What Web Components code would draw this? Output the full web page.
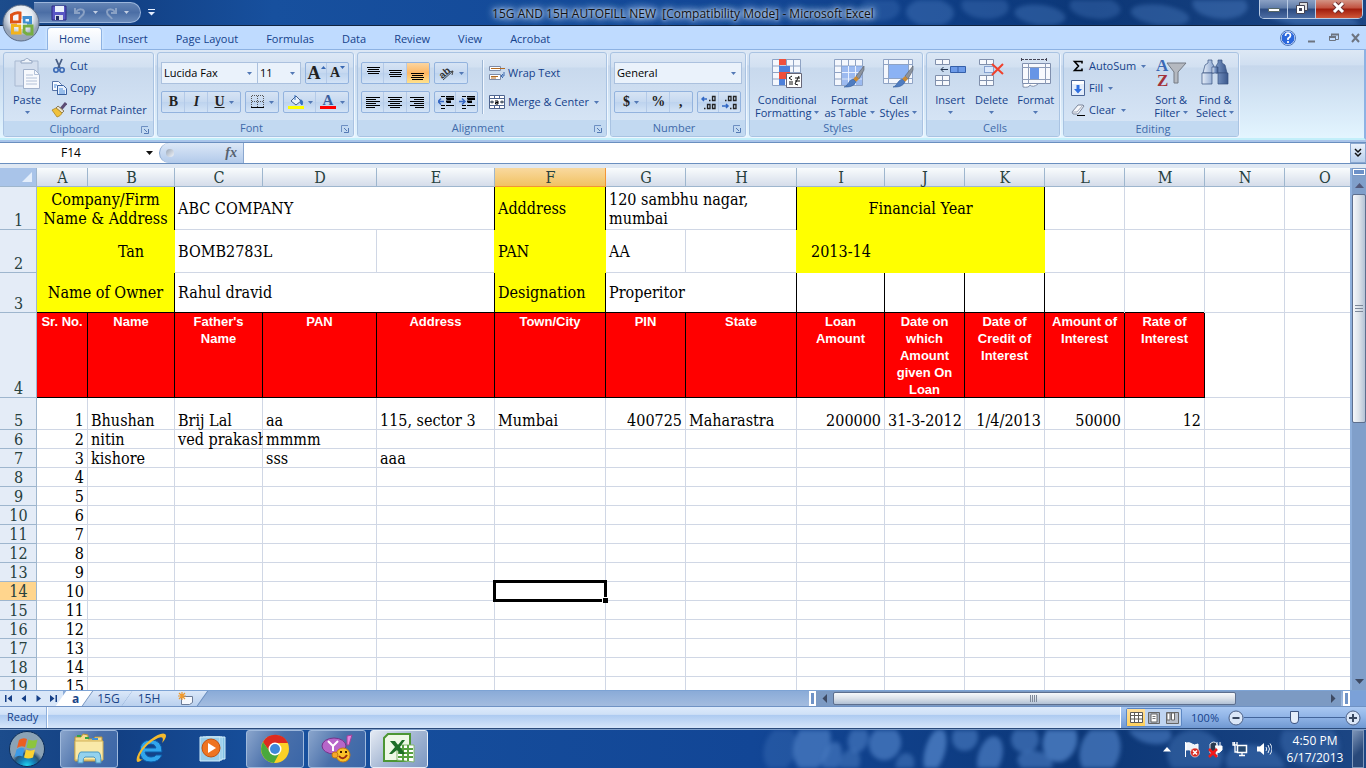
<!DOCTYPE html>
<html lang="en">
<head>
<meta charset="utf-8">
<title>15G AND 15H AUTOFILL NEW</title>
<style>
  html, body { height: 100%; }
  body {
    margin: 0;
    overflow: hidden;
    font: 11px/16px "Open Sans", "Noto Sans", sans-serif;
    color: #15428b;
  }
</style>
</head>
<body>
<excel-desktop></excel-desktop>

<script>
// ICONS - each one is [width, height, svg markup]
const paper = '<path d="M1.5 1.5h28v26h-28z" fill="#f4f7fd" stroke="#8fa3c4"/><path d="M1 8h29M1 14.500h29M1 21h29M8.500 1v27M15.500 1v27M22.500 1v27" stroke="#8fa3c4"/>';
const brush = '<path d="M31 8 23 18l3 3 5-9z" fill="#8c939d" stroke="#555c66" stroke-width=".6"/><path d="m23 18-3 3 3 3 3-3z" fill="#c98a35"/><path d="m20 21 3 3c-3 5-7 5-12 5 4-1 4-6 9-8z" fill="#4f7cc0" stroke="#305a9b" stroke-width=".6"/>';
const ICONS = {
  save: [16, 16, '<path d="M1 1h14v14H1z" fill="#5856c4" stroke="#2e2a85"/><path d="M4 1h9v6H4z" fill="#e9f0fb"/><path d="M4 10h8v5H4z" fill="#d9deea"/><path d="M5 11h3v4H5z" fill="#222b66"/>'],
  undo: [14, 14, '<path d="M2 2v5h5M3 6c3-4 8-3 8 0 0 4-4 4-5 7" fill="none" stroke="#8aa1c4" stroke-width="2"/>'],
  redo: [14, 14, '<path d="M12 2v5H7M11 6C8 2 3 3 3 6c0 4 4 4 5 7" fill="none" stroke="#8aa1c4" stroke-width="2"/>'],
  qat: [7, 7, '<path d="M0 .5h7" stroke="#e4eeff"/><path d="M0 3h7L3.500 6.500z" fill="#e4eeff"/>'],
  arrow: [5, 3, '<path d="M0 0h5L2.500 3z" fill="#5278b5"/>'],
  arrowpale: [5, 3, '<path d="M0 0h5L2.500 3z" fill="#c3cfe2"/>'],
  arrowdark: [7, 4, '<path d="M0 0h7L3.500 4z" fill="#111"/>'],
  orb: [38, 38, '<defs><radialGradient id="g" cx=".5" cy=".35"><stop offset="0" stop-color="#fff"/><stop offset=".65" stop-color="#e7ecf2"/><stop offset="1" stop-color="#98a5b8"/></radialGradient></defs><circle cx="19" cy="19" r="18" fill="url(#g)" stroke="#5b6d88"/><g fill="none" stroke-width="3"><path d="M18 9v9H9.500v-7q4-3 8.500-2z" stroke="#de5216"/><path d="M22 13.500h6.500v5.500H22z" stroke="#3f8ed0"/><path d="M10.500 21.500H18V29h-7.500z" stroke="#f2b31d"/><path d="M22 22h8v8h-5l-3-2z" stroke="#76ae42"/></g><path d="M20 15v10M15 20h10" stroke="#fff"/>'],
  paste: [28, 32, '<path d="M2 3h23v25H2z" fill="#d3deee" stroke="#a9b9d1"/><path d="M8 5V3l4-1c0-2 4-2 4 0l3 1v2z" fill="#eef3fa" stroke="#94a6c2"/><path d="M10.500 11.500h11l5 5v14h-16z" fill="#f7f9fd" stroke="#a2b2cc"/><path d="M21.500 11.500v5h5M13 17h7M13 20h11M13 23h11M13 26h11" fill="none" stroke="#b3c1d8"/>'],
  cut: [16, 16, '<path d="M5 1l4 9M11 1 7 10" stroke="#4a5f86" stroke-width="1.800"/><circle cx="5" cy="12" r="2.200" fill="none" stroke="#3a69b5" stroke-width="1.600"/><circle cx="11" cy="12" r="2.200" fill="none" stroke="#3a69b5" stroke-width="1.600"/>'],
  copy: [16, 16, '<path d="M1.500 1.500h6l3 3v6h-9z" fill="#f7faff" stroke="#5774a8"/><path d="M6.500 5.500h6l3 3v6h-9z" fill="#e6effc" stroke="#375f9f"/><path d="M3 5h3M3 7h2M8 9h4M8 11h6M8 13h6" stroke="#4a8cd9"/>'],
  painter: [16, 16, '<path d="M15 1 10 7" stroke="#5b4c75" stroke-width="3"/><path d="m7 4 6 5-2 2-6-5z" fill="#e9e2cf" stroke="#8b7d5e"/><path d="M5 6 1 8l5 7c3-1 4-2 5-4z" fill="#f0c13b" stroke="#a8862b" stroke-width=".8"/>'],
  launch: [8, 8, '<path d="M7 .5H.500V7" fill="none" stroke="#6d8fc2"/><path d="M3 3l3 3M7.500 3v4.500H3" fill="none" stroke="#5479b3"/>'],
  borders: [14, 14, '<path d="M.5 1v11M6.500 1v11M12.500 1v11M1 .5h12M1 6.500h12" fill="none" stroke="#555" stroke-dasharray="1 1"/><path d="M0 12.500h13" stroke="#000"/>'],
  fill: [16, 16, '<path d="M3 7 8 2l5 5-5 4z" fill="#e8f1fc" stroke="#45618d"/><path d="M7 1v5M12 6c3 0 3 2 2 5-2-1-1-3-2-5z" stroke="#3670c0" fill="#3670c0"/><path d="M0 12h16v3H0z" fill="#ff0"/>'],
  fontcolor: [16, 16, '<text x="8" y="11" text-anchor="middle" font-family="Liberation Serif, serif" font-weight="bold" font-size="15" fill="#3b5d9c">A</text><path d="M0 12h16v3H0z" fill="red"/>'],
  sizeup: [5, 4, '<path d="M0 3 2.500 0 5 3z" fill="#3868b3"/>'],
  sizedown: [5, 4, '<path d="M0 0h5L2.500 3z" fill="#3868b3"/>'],
  orient: [16, 16, '<path d="M4 15 14 6M14 6l-4 1M14 6l-1 4" stroke="#444" fill="none"/><text x="0" y="11" font-size="10" font-weight="bold" font-family="Liberation Sans, sans-serif" transform="rotate(-40 6 8)" fill="#333">ab</text>'],
  wrap: [16, 16, '<path d="M.5 1.500h11v4H.500zM.5 9.500h11v5H.500z" fill="#fff" stroke="#7c8ba8"/><path d="M2 3.500h14M2 11.500h7M2 13h5" stroke="#b36a22"/><path d="M15 7v4h-2M14 9l-2 2 2 2" fill="none" stroke="#3c6ab0"/>'],
  merge: [16, 16, '<path d="M.5 1.500h15v13H.500z" fill="#fff" stroke="#4e648f"/><path d="M1 4.500h14M1 11.500h14M5.500 1v3M10.500 1v3M5.500 12v3M10.500 12v3" stroke="#4e648f"/><path d="M1 8h4M11 8h4M3 6.500v3M13 6.500v3" stroke="#234"/><path d="M6 7h3v3H6.500V8.500H9" fill="none" stroke="#000"/>'],
  decup: [16, 15, '<path d="M6 4H1M3 2 1 4l2 2" stroke="#3268c4" stroke-width="1.500" fill="none"/><g fill="none" stroke="#222" stroke-width="1.300"><path d="M8 5.500h1.500M11.500 1.500h2.500v4h-2.500zM3 13.500h1.500M6.500 9.500H9v4H6.500zM11.500 9.500H14v4h-2.500z"/></g>'],
  decdown: [16, 15, '<path d="M0 11h6M4 9l2 2-2 2" stroke="#3268c4" stroke-width="1.500" fill="none"/><g fill="none" stroke="#222" stroke-width="1.300"><path d="M3 5.500h1.500M6.500 1.500H9v4H6.500zM11.500 1.500H14v4h-2.500zM8 13.500h1.500M11.500 9.500H14v4h-2.500z"/></g>'],
  cond: [32, 32, paper + '<path d="M8 1h7v6H8zM8 14h11v7H8z" fill="#f0503c"/><path d="M8 8h11v6H8zM8 21h6v6H8z" fill="#4d80da"/><path d="M15.500 15.500h15v14h-15z" fill="#fff" stroke="#667"/><path d="m21 18-3 2 3 2M18 24h4M18 26h4M24 20h5M24 23h5M28 18l-4 8M24 26l3 1" fill="none" stroke="#111"/>'],
  ftable: [32, 32, paper + '<path d="M9 8h20v19H9z" fill="#6d9aea" opacity=".65"/><path d="M9 14.500h20M9 21h20M15.500 8v19M22.500 8v19" stroke="#e8f0ff"/>' + brush],
  cstyle: [32, 32, '<path d="M1.500 1.500h29v24h-29z" fill="#f4f7fd" stroke="#8fa3c4"/><path d="M1 6.500h29M1 20.500h29M6.500 1v25M26.500 1v25" stroke="#8fa3c4"/><path d="M7 7h19v13H7z" fill="#8bb2f4"/>' + brush],
  insert: [32, 32, '<path d="M1.500 1.500h14v5h-14zM1.500 17.500h14v10h-14zM8.500 1.500v5M8.500 17.500v10M1.500 22.500h14" fill="#f7f9fd" stroke="#8190ac"/><path d="M16.500 8.500h15v6h-15zM24 8.500v6" fill="#6c9ae8" stroke="#345fa9"/><path d="M14 11.500H7M9.500 9 7 11.500 9.500 14" stroke="#23344f" fill="none"/>'],
  del: [32, 32, '<path d="M3.500 1.500h14v5h-14zM3.500 17.500h14v10h-14zM10.500 1.500v5M10.500 17.500v10M3.500 22.500h14" fill="#f7f9fd" stroke="#8190ac"/><path d="M8.500 8.500h9v6h-9z" fill="#dce8fb" stroke="#345fa9" stroke-dasharray="1 1"/><path d="m16 6 11 10M27 6 16 17" stroke="#f0412c" stroke-width="2"/>'],
  format: [32, 32, '<path d="M1 1.500h26M1.500 0v4M26.500 0v4" stroke="#445" stroke-dasharray="3 1"/><path d="M2.500 5.500h28v20h-28z" fill="#f7f9fd" stroke="#7f8fae"/><path d="M2 9.500h28M2 21.500h28M8.500 5v21M25.500 5v21" stroke="#8d9cb8"/><path d="M10 10h9v11h-9z" fill="#6795e6"/><path d="M3 26v3q6 1 7-2 3 3 8-1" fill="#fff" stroke="#8190ac"/>'],
  sum: [12, 12, '<path d="M10 3.500V1.500H2.500L6.500 6l-4 4.500H10v-2" fill="none" stroke="#000" stroke-width="1.600"/>'],
  filld: [14, 16, '<path d="M.5.500h13v15H.500z" fill="#e3edfb" stroke="#4a6596"/><path d="M1 1h12v3H1z" fill="#fff"/><path d="M5.500 5h3v4H11l-4 4.500L3 9h2.500z" fill="#2f6fe0"/>'],
  clear: [16, 14, '<path d="M2 9 8 2h5l1 1-6 8H3z" fill="#f7f8fb" stroke="#7c879c"/><path d="M2 9h5l6-7" fill="none" stroke="#9da8bb"/><path d="M7 12.500h8" stroke="#000"/>'],
  sort: [32, 32, '<path d="M12 5h19l-8 9v11h-4V14z" fill="#b5b9c0" stroke="#747a84"/><g font-family="Liberation Serif, serif" font-weight="bold" font-size="17"><text x="1" y="13" fill="#3b69b4">A</text><text x="2" y="28" fill="#a3323a">Z</text></g>'],
  find: [32, 32, '<defs><linearGradient id="g"><stop offset="0" stop-color="#e5edf8"/><stop offset=".5" stop-color="#7f9cc9"/><stop offset="1" stop-color="#3a578c"/></linearGradient></defs><g fill="url(#g)" stroke="#37527f" stroke-width=".7"><path d="M9 2h4v3l2 3v7H4l2-8 3-2zM19 2h4v3l3 2 2 8H17V8l2-3z"/><path d="M3 15h10v11H3zM19 15h10v11H19z"/><path d="M13 9h6v6h-6z"/></g>'],
  help: [16, 16, '<circle cx="8" cy="8" r="7" fill="#2c68dc" stroke="#f4f8ff"/><circle cx="8" cy="8" r="7.500" fill="none" stroke="#4d75b8"/><path d="M5.500 6q0-3 2.500-3t2.500 2.500Q10.500 7 8 8.500V10M8 11v2" fill="none" stroke="#fff" stroke-width="1.700"/>'],
  mdimin: [12, 12, '<path d="M2 9.500h7" stroke="#6d7480" stroke-width="2"/>'],
  mdirest: [12, 12, '<path d="M3.500 5V2.500h7v5H8M1.500 4.500h6v4h-6z" fill="none" stroke="#6d7480"/><path d="M3 2.500h8M1 5h7" stroke="#6d7480" stroke-width="2"/>'],
  mdix: [12, 12, '<path d="m2 2 7 8M9 2l-7 8" stroke="#6d7480" stroke-width="2"/>'],
  wmin: [14, 12, '<path d="M1.500 6.500h11v3h-11z" fill="#fff" stroke="#566"/>'],
  wrest: [14, 12, '<path d="M4.500.500h8v8h-8z" fill="#ddd" stroke="#445"/><path d="M1.500 3.500h8v8h-8z" fill="#fff" stroke="#445"/><path d="M4 6h3v3H4z" fill="#445"/>'],
  wx: [14, 12, '<path d="m2 1 9 9M11 1l-9 9" stroke="#6e3030" stroke-width="5"/><path d="m2 1 9 9M11 1l-9 9" stroke="#fff" stroke-width="3"/>'],
  chevrons: [8, 10, '<path d="m1 1 3 3 3-3M1 5l3 3 3-3" fill="none" stroke="#111" stroke-width="1.500"/>'],
  corner: [12, 12, '<path d="M11 1v10H1z" fill="#e4eefb"/>'],
  first: [8, 8, '<path d="M0 0h1.500v7H0zM7 0v7L2.500 3.500z" fill="#153f86"/>'],
  prev: [8, 8, '<path d="M6 0v7L1.500 3.500z" fill="#153f86"/>'],
  next: [8, 8, '<path d="M1.500 0v7L6 3.500z" fill="#153f86"/>'],
  last: [8, 8, '<path d="M5.500 0H7v7H5.500zM0 0v7l4.500-3.500z" fill="#153f86"/>'],
  newsheet: [16, 14, '<path d="M3.500 4.500h11v6l-3 2h-8z" fill="#f5f8fd" stroke="#6c7c98"/><path d="M4 0v8M0 4h8M1 1l6 6M7 1 1 7" stroke="#f0992c" stroke-width="1.200"/>'],
  left: [6, 9, '<path d="M5 0v9L.500 4.500z" fill="#3e4a63"/>'],
  right: [6, 9, '<path d="M1 0v9l4.500-4.500z" fill="#3e4a63"/>'],
  up: [9, 5, '<path d="M0 5h9L4.500 0z" fill="#54597a"/>'],
  down: [9, 5, '<path d="M0 0h9L4.500 5z" fill="#3e4a63"/>'],
  vnormal: [13, 11, '<path d="M.5.500h12v10H.500z" fill="#fff" stroke="#5d5a55"/><path d="M0 3.500h13M0 7h13M4.500 0v11M8.500 0v11" stroke="#5d5a55"/>'],
  vlayout: [12, 12, '<path d="M.5.500h11v11H.500z" fill="#a9b2c0" stroke="#666"/><path d="M3 2h6v8H3z" fill="#fff" stroke="#666"/><path d="M4.500 4.500h3M4.500 6.500h3" stroke="#777"/>'],
  vbreak: [13, 12, '<path d="M.5.500h12v11H.500z" fill="#b7bdc8" stroke="#666"/><path d="M1 1h3v7H1zM5.500 1h3v7h-3z" fill="#fff" stroke="#666"/>'],
  minus: [16, 16, '<circle cx="8" cy="8" r="7" fill="#dbe7f8" stroke="#4a5f86"/><path d="M4.500 8h7" stroke="#38475f" stroke-width="2"/>'],
  plus: [16, 16, '<circle cx="8" cy="8" r="7" fill="#dbe7f8" stroke="#4a5f86"/><path d="M4 8h8M8 4v8" stroke="#38475f" stroke-width="2"/>'],
  start: [38, 38, '<defs><radialGradient id="g" cx=".5" cy="1"><stop offset="0" stop-color="#22e0f8"/><stop offset=".45" stop-color="#1580b8"/><stop offset=".75" stop-color="#2c5577"/><stop offset="1" stop-color="#8ba3b6"/></radialGradient></defs><circle cx="19" cy="19" r="17.500" fill="url(#g)" stroke="#0b2c58"/><path d="M11 10q4-3 8-1l-2 8q-4-2-8 1z" fill="#ec5f22"/><path d="M20.500 9.500q4 2 9 0l-2 8q-5 2-9 0z" fill="#8cc53f"/><path d="M8.500 19.500q4-3 8-1l-2 8q-4-2-8 1z" fill="#3b9be8"/><path d="M18 19.500q4 2 9 0l-2 8q-5 2-9 0z" fill="#fbd232"/>'],
  explorer: [34, 32, '<path d="M3 4h6l2-3 5 1v4h5l2-2h7v24H3z" fill="#f5dc8c" stroke="#b89238"/><path d="M3 8h28v19H3z" fill="#f9e9a8" stroke="#d1b157"/><path d="M5 3h4M13 5h4" stroke="#34a345" stroke-width="2"/><path d="M20 6h6" stroke="#3f8fd7" stroke-width="2"/><path d="M6 30q0-11 3-11h17q3 0 3 11h-5q0-6-2-6h-9q-2 0-2 6z" fill="#93d2ee" stroke="#4b98c2"/>'],
  ie: [34, 34, '<path d="M28 20h-17q1 5 6 5 4 0 5-2h6q-3 7-11 7-11 0-11-11T17 8q11 0 11 12zM11 16h11q-1-4-5-4t-6 4z" fill="#31a5ec" stroke="#0c5ca9"/><path d="M9 27q-8 7-6-2 3-9 13-17 11-8 15-6 3 2-3 9 3-8-4-5Q11 12 6 23q-2 6 3 4z" fill="#f3ba2e"/>'],
  wmp: [32, 30, '<path d="M9 3h19v22H9z" fill="#83c2e4" stroke="#d2eefc"/><path d="M6 3h19v23H6z" fill="#6db4de" stroke="#d2eefc"/><path d="M3 3h20v24H3z" fill="#98cce8" stroke="#d2eefc"/><circle cx="14" cy="14" r="9" fill="#ee7420" stroke="#c2510d"/><path d="m11 9 8 5-8 5z" fill="#fff"/>'],
  chrome: [32, 32, '<circle cx="16" cy="16" r="14" fill="#fbd126"/><path d="M4 9A14 14 0 0 1 29 10H16L11 19z" fill="#dd2a20"/><path d="M4 9a14 14 0 0 0 11 21l6-11H11z" fill="#4aa83d"/><circle cx="16" cy="16" r="6.500" fill="#fff"/><circle cx="16" cy="16" r="5" fill="#3f88d9"/>'],
  yahoo: [34, 30, '<ellipse cx="14" cy="12" rx="12" ry="8" fill="#b766c9" stroke="#74338a"/><path d="m8 7 5 5 5-5M13 12v5" fill="none" stroke="#fff" stroke-width="2"/><path d="m27 2 5-1-3 10h-2z" fill="#e884e0" stroke="#a04298"/><circle cx="23" cy="21" r="7" fill="#f9c229" stroke="#c67a12"/><path d="M19 22q4 5 8-1" fill="none" stroke="#9b2b10" stroke-width="2"/><circle cx="15" cy="21" r="3" fill="#f6a82a" stroke="#c67a12"/><path d="M20 18h2M25 18h2" stroke="#402000" stroke-width="2"/>'],
  excel: [34, 32, '<path d="M6 1h22v25l-3 2H2V5z" fill="#eef8e6" stroke="#4c9633" stroke-width="2"/><path d="M15 12h17v17l-17-2z" fill="#fff" stroke="#7fb46b"/><path d="M16 16h15M16 20h15M16 24h15M21 12v16M26 12v16" stroke="#56a03f" stroke-width="2"/><path d="M8 8h5l3 4 4-5h3l-5 7 5 7h-5l-3-4-5 4H7l6-7z" fill="#1e6e28"/>'],
  trayup: [8, 5, '<path d="M0 4.500h8L4 0z" fill="#fff"/>'],
  flag: [16, 17, '<path d="M1.500 1v15M2 2q4-1 6 1t6 0v7q-3 2-6 0T2 9z" fill="#eef2f8" stroke="#fff"/><circle cx="11" cy="11.500" r="4.500" fill="#d8291f" stroke="#fff" stroke-width=".6"/><path d="m9 9.500 4 4M13 9.500l-4 4" stroke="#fff" stroke-width="1.500"/>'],
  plug: [16, 17, '<path d="M2 3q4-4 7 0v9H2z" fill="#2b3b50" stroke="#dfe6ef"/><path d="M7 5h7v4q-3 4-5 2v5" fill="#fff" stroke="#fff"/><path d="M9 1v4M12 1v4" stroke="#fff"/><path d="m1 8 8 8M9 8l-8 8" stroke="#f31818" stroke-width="2.500"/>'],
  net: [16, 16, '<path d="M5.500 4.500h9v7h-9z" fill="#26496f" stroke="#fff" stroke-width="1.500"/><path d="M7 14.500h6M10 12v2M2.500 1v4M1 1v3h4V1M3 5v6h2" fill="none" stroke="#fff" stroke-width="1.300"/>'],
  vol: [16, 16, '<path d="M1 5.500h3L8 2v12l-4-3.500H1z" fill="#fff"/><path d="M10 6q1.500 2 0 4M12 4q3 4 0 8M14 2.500q4 5.500 0 11" fill="none" stroke="#e6eef8"/>']
};
// horizontal stroke icons: text alignment buttons
const bars = (rows) => rows.map(([x, y, w]) => `<path d="M${x} ${y}.5h${w}" stroke="#000"/>`).join("");
ICONS.atop = [15, 15, bars([[1, 1, 13], [2, 3, 11], [1, 5, 13], [2, 7, 11]])];
ICONS.amid = [15, 15, bars([[1, 4, 13], [2, 6, 11], [1, 8, 13], [2, 10, 11]])];
ICONS.abot = [15, 15, bars([[1, 7, 13], [2, 9, 11], [1, 11, 13], [2, 13, 11]])];
ICONS.aleft = [15, 13, bars([[0, 1, 14], [0, 3, 10], [0, 5, 14], [0, 7, 10], [0, 9, 14], [0, 11, 9]])];
ICONS.acenter = [15, 13, bars([[0, 1, 14], [2, 3, 10], [0, 5, 14], [2, 7, 10], [0, 9, 14], [2, 11, 10]])];
ICONS.aright = [15, 13, bars([[0, 1, 14], [4, 3, 10], [0, 5, 14], [4, 7, 10], [0, 9, 14], [5, 11, 9]])];
const indent = bars([[3, 1, 4], [8, 1, 8], [9, 4, 7], [9, 7, 4], [3, 10, 4], [8, 10, 8], [3, 13, 4]]) + '<path d="M8 3.500h8M8 6.500h5" stroke="#000" stroke-width="2"/>';
ICONS.outdent = [16, 15, indent + '<path d="M6 6.500H0M3 3.500l-3 3 3 3" fill="none" stroke="#3767c2" stroke-width="1.500"/>'];
ICONS.indent = [16, 15, indent + '<path d="M0 6.500h6M3 3.500l3 3-3 3" fill="none" stroke="#3767c2" stroke-width="1.500"/>'];

// small helper: attach the template to the element
function mount(el, html) {
  const template = document.createElement("template");
  template.innerHTML = html;
  el.attachShadow({ mode: "open" }).appendChild(template.content.cloneNode(true));
}

class OfficeIcon extends HTMLElement {
  connectedCallback() {
    if (this.shadowRoot) return;
    const [w, h, art] = ICONS[this.getAttribute("name")];
    mount(this, `<style>:host { display: inline-flex; flex: none; } svg { display: block; }</style>
      <svg width="${w}" height="${h}" viewBox="0 0 ${w} ${h}" aria-hidden="true">${art}</svg>`);
  }
}

// wallpaper showing through the glass of the title bar and the task bar
class AeroGlass extends HTMLElement {
  connectedCallback() {
    if (this.shadowRoot) return;
    const blobs = (this.getAttribute("blobs") || "").split(";").filter(Boolean).map((b) => {
      const [x, y, rx, ry, o] = b.split(" ");
      return `<ellipse cx="${x}" cy="${y}" rx="${rx}" ry="${ry}" opacity="${o}" transform="rotate(15 ${x} ${y})"/>`;
    }).join("");
    mount(this, `
      <style>
        :host { position: absolute; inset: 0; z-index: -1; overflow: hidden; background: linear-gradient(90deg, #1c4c8c, #123f82 8%, #17509e 20%, #124696 55%, #0c3777 80%, #1c4684); }
        svg { width: 100%; height: 100%; filter: blur(2px); }
      </style>
      <svg viewBox="0 0 1366 40" preserveAspectRatio="none" fill="#4d7fc4">${blobs}</svg>`);
  }
}

class TitleBar extends HTMLElement {
  connectedCallback() {
    if (this.shadowRoot) return;
    mount(this, `
      <style>
        :host { display: grid; grid-template-columns: 1fr auto 1fr; height: 26px; position: relative; z-index: 2; border-bottom: 1px solid #10233f; box-sizing: border-box; }
        button { border: 0; padding: 0; background: none; display: flex; align-items: center; justify-content: center; }
        .orb { position: absolute; left: 2px; top: 4px; border-radius: 50%; }
        .quick { display: flex; align-items: center; gap: 7px; }
        .pill { display: flex; align-items: center; gap: 6px; margin-left: 34px; padding: 0 11px 0 17px; height: 21px; box-sizing: border-box; border: 1px solid #9cb6dc; border-left: 0; border-radius: 0 11px 11px 0; background: linear-gradient(#6484b4, #4b6ea5 50%, #6c8cbb); }
        h1 { margin: 0; padding: 5px 16px 0; font: 12px/18px "Open Sans", sans-serif; color: #111; white-space: pre; text-shadow: 0 0 3px #cfe0f7, 0 0 6px #cfe0f7, 0 0 8px #b4ceef, 0 0 10px #b4ceef; }
        .window { justify-self: end; display: flex; margin-right: 3px; height: 18px; border: 1px solid #b9cbe4; border-top: 0; border-radius: 0 0 5px 5px; overflow: hidden; }
        .window button { width: 28px; padding-bottom: 2px; border-right: 1px solid #b9cbe4; background: linear-gradient(#8ba1c4, #5f7ba8 45%, #2b4a80 50%, #4c6da3); }
        .window button.close { width: 46px; border: 0; background: linear-gradient(#d39384, #c2503e 45%, #a01c0c 50%, #cf5638); }
      </style>
      <aero-glass blobs="640 20 20 16 .2;880 14 20 20 .3;930 20 24 22 .4;985 10 24 20 .35;1040 24 26 16 .4;1095 12 26 18 .35;1160 24 30 16 .4;1220 8 28 22 .45;1310 28 50 16 .5"></aero-glass>
      <div class="quick">
        <div class="pill">
          <button aria-label="Save"><office-icon name="save"></office-icon></button>
          <button aria-label="Undo"><office-icon name="undo"></office-icon></button>
          <button aria-label="Undo list"><office-icon name="arrowpale"></office-icon></button>
          <button aria-label="Redo"><office-icon name="redo"></office-icon></button>
          <button aria-label="Redo list"><office-icon name="arrowpale"></office-icon></button>
        </div>
        <button aria-label="Customize toolbar"><office-icon name="qat"></office-icon></button>
      </div>
      <h1>15G AND 15H AUTOFILL NEW  [Compatibility Mode] - Microsoft Excel</h1>
      <div class="window">
        <button aria-label="Minimize"><office-icon name="wmin"></office-icon></button>
        <button aria-label="Restore"><office-icon name="wrest"></office-icon></button>
        <button class="close" aria-label="Close"><office-icon name="wx"></office-icon></button>
      </div>
      <button class="orb" aria-label="Office Button"><office-icon name="orb"></office-icon></button>`);
  }
}

class RibbonTabs extends HTMLElement {
  connectedCallback() {
    if (this.shadowRoot) return;
    const tabs = this.getAttribute("tabs").split(",");
    mount(this, `
      <style>
        :host { display: flex; justify-content: space-between; height: 24px; padding-left: 47px; background: #bfdbff; border-bottom: 1px solid #8db2e3; box-sizing: border-box; }
        nav { display: flex; gap: 4px; align-items: stretch; padding-top: 1px; }
        button { border: 1px solid transparent; border-bottom: 0; padding: 0 11px; background: none; font: inherit; color: inherit; }
        nav button[aria-selected=true] { border-color: #8db2e3; border-radius: 4px 4px 0 0; background: linear-gradient(#fff, #e6effb); margin-bottom: -1px; box-shadow: 0 0 3px #e4f2ff; }
        .tools { display: flex; align-items: center; gap: 10px; padding-right: 4px; }
        .tools button { padding: 0; border: 0; display: flex; }
      </style>
      <nav role="tablist">${tabs.map((t, i) => `<button role="tab" aria-selected="${i === 0}">${t}</button>`).join("")}</nav>
      <div class="tools">
        <button aria-label="Help"><office-icon name="help"></office-icon></button>
        <button aria-label="Minimize sheet"><office-icon name="mdimin"></office-icon></button>
        <button aria-label="Restore sheet"><office-icon name="mdirest"></office-icon></button>
        <button aria-label="Close sheet"><office-icon name="mdix"></office-icon></button>
      </div>`);
  }
}

class RibbonGroup extends HTMLElement {
  connectedCallback() {
    if (this.shadowRoot) return;
    mount(this, `
      <style>
        :host { display: flex; flex-direction: column; flex: none; box-sizing: border-box; height: 85px; border: 1px solid #a9c3e2; border-radius: 3px; overflow: hidden; background: linear-gradient(#dce7f5, #d2e0f1 17%, #c8d9ed 18%, #d9e7f7); box-shadow: 1px 1px 0 #eff6ff; }
        .body { flex: 1; display: flex; padding: 0 3px; }
        footer { display: flex; align-items: center; height: 16px; background: #c2d9f1; color: #3e6aaa; }
        footer span { flex: 1; text-align: center; padding-left: 4px; }
        button { border: 0; padding: 0; margin-right: 4px; background: none; }
      </style>
      <div class="body"><slot></slot></div>
      <footer><span>${this.getAttribute("label")}</span>${this.hasAttribute("launcher") ? `<button aria-label="${this.getAttribute("label")} settings"><office-icon name="launch"></office-icon></button>` : ""}</footer>`);
  }
}

// icon on top, one or two lines of text below
class BigButton extends HTMLElement {
  connectedCallback() {
    if (this.shadowRoot) return;
    const [one, two] = this.getAttribute("label").split("|");
    mount(this, `
      <style>
        :host { display: block; flex: none; }
        button { display: flex; flex-direction: column; align-items: center; height: 100%; border: 0; padding: 5px 0 0; background: none; font: inherit; line-height: 13px; color: inherit; white-space: nowrap; }
        span { display: flex; align-items: center; gap: 3px; min-height: 13px; }
        .one { margin-top: 3px; }
      </style>
      <button><office-icon name="${this.getAttribute("icon")}"></office-icon><span class="one">${one}</span><span>${two || ""}<office-icon name="arrow"></office-icon></span></button>`);
  }
}

class SmallButton extends HTMLElement {
  connectedCallback() {
    if (this.shadowRoot) return;
    const menu = this.hasAttribute("menu") ? '<office-icon name="arrow"></office-icon>' : "";
    mount(this, `
      <style>
        :host { display: block; }
        button { display: flex; align-items: center; gap: 5px; height: 22px; border: 0; padding: 0; background: none; font: inherit; color: inherit; white-space: nowrap; }
        .box { display: flex; justify-content: center; width: 16px; margin-right: -2px; }
      </style>
      <button><span class="box"><office-icon name="${this.getAttribute("icon")}"></office-icon></span><slot></slot>${menu}</button>`);
  }
}

// bordered cluster of tool-buttons
class ToolSet extends HTMLElement {
  connectedCallback() {
    if (this.shadowRoot) return;
    mount(this, `
      <style>
        :host { display: flex; flex: none; box-sizing: border-box; height: 22px; border: 1px solid #93b3de; border-radius: 2px; background: linear-gradient(#d7e4f4, #c5d8f0 50%, #bdd3ee 51%, #d3e3f6); }
      </style><slot></slot>`);
  }
}

class ToolButton extends HTMLElement {
  connectedCallback() {
    if (this.shadowRoot) return;
    const icon = this.getAttribute("icon");
    mount(this, `
      <style>
        :host { display: block; flex: 1; min-width: ${this.hasAttribute("menu") ? 32 : 21}px; box-shadow: -1px 0 #b4cae8; }
        :host(:first-child) { box-shadow: none; }
        :host([active]) button { background: linear-gradient(#fbd5a0, #fdb763 50%, #ffe28c); }
        button { display: flex; align-items: center; justify-content: center; gap: 4px; width: 100%; height: 20px; border: 0; padding: 0; background: none; font: bold 14px/18px "Liberation Serif", serif; color: #222; }
      </style>
      <button aria-label="${this.getAttribute("name")}">${icon ? `<office-icon name="${icon}"></office-icon>` : ""}<slot></slot>${this.hasAttribute("menu") ? '<office-icon name="arrow"></office-icon>' : ""}</button>`);
  }
}

class ToolSelect extends HTMLElement {
  connectedCallback() {
    if (this.shadowRoot) return;
    const value = this.getAttribute("value");
    mount(this, `
      <style>
        :host { display: grid; flex: none; box-sizing: border-box; height: 22px; border: 1px solid #abc1de; background: #eaf2fb; align-items: center; }
        select, office-icon { grid-area: 1 / 1; }
        select { appearance: none; width: 100%; height: 20px; border: 0; padding: 0 2px; background: none; font: inherit; color: #000; }
        office-icon { justify-self: end; margin-right: 5px; pointer-events: none; }
      </style>
      <select aria-label="${this.getAttribute("name")}"><option>${value}</option></select><office-icon name="arrow"></office-icon>`);
  }
}

class OfficeRibbon extends HTMLElement {
  connectedCallback() {
    if (this.shadowRoot) return;
    mount(this, `
      <style>
        :host { display: flex; gap: 3px; padding: 2px 3px; height: 90px; box-sizing: border-box; background: linear-gradient(#dde8f5, #d0dff1 17%, #c6d7ec 18%, #e3f5ff); border-right: 2px solid #8db2e3; border-bottom: 2px solid #c2effa; }
        .clipboard { width: 151px; } .font { width: 197px; } .align { width: 250px; }
        .number { width: 136px; } .styles { width: 174px; } .cells { width: 134px; } .editing { width: 176px; }
        .stack { display: flex; flex-direction: column; padding: 2px 0 0 8px; }
        .editing .stack { padding-left: 3px; }
        .rows { display: flex; flex-direction: column; gap: 7px; padding-top: 9px; }
        .row { display: flex; gap: 4px; }
        .joined { display: flex; }
        .rule { width: 1px; margin: 7px 6px 6px 4px; background: #9db6d4; box-shadow: 1px 0 #f1f7ff; }
        .spread { display: flex; flex: 1; gap: 5px; padding-left: 2px; }
        .spread.loose { gap: 9px; padding-left: 4px; }
        .editing .spread { gap: 8px; padding-left: 8px; }
        .paste { padding: 0 2px 0 6px; }
        .face { width: 97px; } .size { width: 44px; margin-left: -1px; } .kind { width: 128px; }
        .grow { width: 44px; } .biu { width: 80px; } .triple { width: 69px; } .money { width: 79px; }
        .big { font-size: 18px; } .lesser { font-size: 14px; }
        .caret { align-self: flex-start; margin: 3px 0 0 -4px; }
      </style>
      <ribbon-group class="clipboard" label="Clipboard" launcher>
        <big-button class="paste" icon="paste" label="Paste"></big-button>
        <div class="stack">
          <small-button icon="cut">Cut</small-button>
          <small-button icon="copy">Copy</small-button>
          <small-button icon="painter">Format Painter</small-button>
        </div>
      </ribbon-group>
      <ribbon-group class="font" label="Font" launcher>
        <div class="rows">
          <div class="row">
            <div class="joined"><tool-select class="face" name="Font" value="Lucida Fax"></tool-select><tool-select class="size" name="Font size" value="11"></tool-select></div>
            <tool-set class="grow">
              <tool-button name="Grow font"><span class="big">A</span><office-icon class="caret" name="sizeup"></office-icon></tool-button>
              <tool-button name="Shrink font"><span class="lesser">A</span><office-icon class="caret" name="sizedown"></office-icon></tool-button>
            </tool-set>
          </div>
          <div class="row">
            <tool-set class="biu"><tool-button name="Bold">B</tool-button><tool-button name="Italic"><i>I</i></tool-button><tool-button name="Underline" menu><u>U</u></tool-button></tool-set>
            <tool-set><tool-button name="Borders" icon="borders" menu></tool-button></tool-set>
            <tool-set><tool-button name="Fill colour" icon="fill" menu></tool-button><tool-button name="Font colour" icon="fontcolor" menu></tool-button></tool-set>
          </div>
        </div>
      </ribbon-group>
      <ribbon-group class="align" label="Alignment" launcher>
        <div class="rows">
          <div class="row">
            <tool-set class="triple"><tool-button name="Top" icon="atop"></tool-button><tool-button name="Middle" icon="amid"></tool-button><tool-button name="Bottom" icon="abot" active></tool-button></tool-set>
            <tool-set><tool-button name="Orientation" icon="orient" menu></tool-button></tool-set>
          </div>
          <div class="row">
            <tool-set class="triple"><tool-button name="Left" icon="aleft"></tool-button><tool-button name="Centre" icon="acenter"></tool-button><tool-button name="Right" icon="aright"></tool-button></tool-set>
            <tool-set><tool-button name="Decrease indent" icon="outdent"></tool-button><tool-button name="Increase indent" icon="indent"></tool-button></tool-set>
          </div>
        </div>
        <div class="rule"></div>
        <div class="rows">
          <small-button icon="wrap">Wrap Text</small-button>
          <small-button icon="merge" menu>Merge &amp; Center</small-button>
        </div>
      </ribbon-group>
      <ribbon-group class="number" label="Number" launcher>
        <div class="rows">
          <tool-select class="kind" name="Number format" value="General"></tool-select>
          <div class="row">
            <tool-set class="money"><tool-button name="Currency" menu>$</tool-button><tool-button name="Percent">%</tool-button><tool-button name="Comma">,</tool-button></tool-set>
            <tool-set><tool-button name="Increase decimal" icon="decup"></tool-button><tool-button name="Decrease decimal" icon="decdown"></tool-button></tool-set>
          </div>
        </div>
      </ribbon-group>
      <ribbon-group class="styles" label="Styles">
        <div class="spread">
          <big-button icon="cond" label="Conditional|Formatting"></big-button>
          <big-button icon="ftable" label="Format|as Table"></big-button>
          <big-button icon="cstyle" label="Cell|Styles"></big-button>
        </div>
      </ribbon-group>
      <ribbon-group class="cells" label="Cells">
        <div class="spread loose">
          <big-button icon="insert" label="Insert"></big-button>
          <big-button icon="del" label="Delete"></big-button>
          <big-button icon="format" label="Format"></big-button>
        </div>
      </ribbon-group>
      <ribbon-group class="editing" label="Editing">
        <div class="stack">
          <small-button icon="sum" menu>AutoSum</small-button>
          <small-button icon="filld" menu>Fill</small-button>
          <small-button icon="clear" menu>Clear</small-button>
        </div>
        <div class="spread">
          <big-button icon="sort" label="Sort &amp;|Filter"></big-button>
          <big-button icon="find" label="Find &amp;|Select"></big-button>
        </div>
      </ribbon-group>`);
  }
}

class FormulaBar extends HTMLElement {
  connectedCallback() {
    if (this.shadowRoot) return;
    mount(this, `
      <style>
        :host { display: flex; height: 28px; box-sizing: border-box; border-top: 2px solid #a9c4e9; border-bottom: 4px solid #dfe8f3; background: #fff; box-shadow: inset 0 1px #6a8fbf, inset 0 -1px #6a8fbf; padding: 1px 0; }
        input { border: 0; padding: 0; background: none; font: inherit; font-size: 12px; color: #000; outline: 0; min-width: 0; }
        button { border: 0; padding: 0; background: none; }
        .name { display: flex; align-items: center; justify-content: space-between; width: 153px; padding-right: 6px; }
        .name input { width: 142px; text-align: center; }
        .name button { display: flex; }
        .fx { display: flex; align-items: center; justify-content: space-between; width: 85px; box-sizing: border-box; padding: 0 6px; border: 1px solid #8aa7cf; border-width: 0 1px; border-radius: 11px 0 0 11px; background: linear-gradient(#dce8f7, #b2caea); }
        .dot { width: 8px; height: 8px; border-radius: 50%; background: linear-gradient(135deg, #98a5b6, #f2f5fa); }
        .fx button { font: italic bold 14px/18px "Liberation Serif", serif; color: #56616f; }
        .formula { flex: 1; }
        .expand { width: 16px; border: 1px solid #8aa7cf; background: linear-gradient(#e9f1fb, #b9cfec); display: flex; align-items: center; justify-content: center; }
      </style>
      <div class="name"><input aria-label="Name box" value="F14"><button aria-label="Names"><office-icon name="arrowdark"></office-icon></button></div>
      <div class="fx"><span class="dot"></span><button aria-label="Insert function">fx</button></div>
      <input class="formula" aria-label="Formula">
      <button class="expand" aria-label="Expand formula bar"><office-icon name="chevrons"></office-icon></button>`);
  }
}

// WORKSHEET - columns, row heights and cell values
const COLS = { A: 51, B: 87, C: 88, D: 114, E: 118, F: 111, G: 80, H: 111, I: 88, J: 80, K: 80, L: 80, M: 80, N: 80, O: 80 };
const HEIGHTS = { 1: 43, 2: 43, 3: 40, 4: 85, 5: 32 };
// [text, class, colspan]
const ROWS = {
  1: [["Company/Firm Name & Address", "y mid c wrap rk", 2], ["ABC COMPANY", "mid rk", 3], ["Adddress", "y mid rk"], ["120 sambhu nagar, mumbai", "mid wrap rk", 2], ["Financial Year", "y mid c rk", 3], "", "", "", ""],
  2: [["", "y"], ["Tan", "y mid c"], ["BOMB2783L", "mid", 2], ["", "ry"], ["PAN", "y mid"], ["AA", "mid"], ["", "ry"], ["2013-14", "y mid in", 3], "", "", "", ""],
  3: [["Name of Owner", "y mid c rk bk", 2], ["Rahul dravid", "mid rk bk", 3], ["Designation", "y mid rk bk"], ["Properitor", "mid rk bk", 2], ["", "rk bk"], ["", "rk bk"], ["", "rk bk"], ["", "bk"], ["", "bk"], "", ""],
  4: ["Sr. No.", "Name", "Father's Name", "PAN", "Address", "Town/City", "PIN", "State", "Loan Amount", "Date on which Amount given On Loan", "Date of Credit of Interest", "Amount of Interest", "Rate of Interest"].map((t) => [t, "head"]).concat(["", ""]),
  5: [["1", "n"], "Bhushan", "Brij Lal", "aa", "115, sector 3", "Mumbai", ["400725", "n"], "Maharastra", ["200000", "n"], ["31-3-2012", "n"], ["1/4/2013", "n"], ["50000", "n"], ["12", "n"], "", ""],
  6: [["2", "n"], "nitin", "ved prakash", "mmmm"],
  7: [["3", "n"], "kishore", "", "sss", "aaa"]
};

class SheetGrid extends HTMLElement {
  connectedCallback() {
    if (this.shadowRoot) return;
    const letters = Object.keys(COLS);
    let body = "";
    for (let r = 1; r <= 19; r++) {
      let cells = ROWS[r] || [[String(r - 4), "n"]];
      if (r > 5) cells = cells.concat(Array(15 - cells.length).fill(""));
      body += `<tr style="height: ${HEIGHTS[r] || 19}px"><th scope="row" class="${r === 14 ? "on" : ""}">${r}</th>` + cells.map((c, i) => {
        const [text, cls, span] = Array.isArray(c) ? c : [c, ""];
        const here = r === 14 && i === 5 ? " sel" : "";
        return `<td class="${cls}${here}" colspan="${span || 1}">${text.replace("&", "&amp;")}${here ? "<i></i>" : ""}</td>`;
      }).join("") + "</tr>";
    }
    mount(this, `
      <style>
        :host { display: block; flex: 1; min-width: 0; overflow: hidden; background: #fff; font: 16px/18px "DejaVu Serif Condensed", "DejaVu Serif", serif; color: #000; }
        table { table-layout: fixed; border-collapse: separate; border-spacing: 0; width: 1365px; }
        td { --r: #d0d7e5; --b: #d0d7e5; padding: 0 4px 0 3px; vertical-align: bottom; white-space: nowrap; overflow: hidden; box-shadow: inset -1px 0 var(--r), inset 0 -1px var(--b); }
        th { padding: 0; font-weight: normal; vertical-align: bottom; color: #27413e; box-shadow: inset -1px -1px #9eb6ce; background: #e4ecf7; }
        thead th { height: 19px; vertical-align: middle; background: linear-gradient(#f9fcfd, #d3dbe9); }
        thead th.on { background: linear-gradient(#f9d99f, #f1c15f); box-shadow: inset -1px -1px #f29536; }
        th.on { background: #ffd58d; }
        thead .all { background: #a9c4e9; text-align: right; }
        .all office-icon { margin-right: 4px; }
        .mid { vertical-align: middle; }
        .c { text-align: center; }
        .n { text-align: right; }
        .in { padding-left: 14px; }
        .wrap { white-space: normal; line-height: 19px; }
        .y { --r: #ff0; --b: #ff0; background: #ff0; }
        .ry { --r: #ff0; }
        .rk { --r: #000; }
        .bk { --b: #000; }
        .head { --r: #000; --b: #000; background: #f00; color: #fff; text-align: center; vertical-align: top; white-space: normal; font: bold 13px/17px "Liberation Sans", Arial, sans-serif; }
        .sel { position: relative; overflow: visible; }
        .sel::after { content: ""; position: absolute; inset: -2px -1px -1px -2px; border: 3px solid #000; }
        .sel i { position: absolute; right: -2px; bottom: -2px; z-index: 1; width: 5px; height: 5px; background: #000; box-shadow: -1px -1px #fff; }
      </style>
      <table>
        <colgroup><col style="width: 37px">${letters.map((l) => `<col style="width: ${COLS[l]}px">`).join("")}</colgroup>
        <thead><tr><th class="all"><office-icon name="corner"></office-icon></th>${letters.map((l) => `<th scope="col" class="${l === "F" ? "on" : ""}">${l}</th>`).join("")}</tr></thead>
        <tbody>${body}</tbody>
      </table>`);
  }
}

class SheetScroll extends HTMLElement {
  connectedCallback() {
    if (this.shadowRoot) return;
    mount(this, `
      <style>
        :host { display: flex; flex-direction: column; flex: none; width: 16px; box-sizing: border-box; border-left: 2px solid #8fb0dc; background: #809fca; }
        button { border: 0; padding: 0; height: 18px; background: none; display: flex; align-items: center; justify-content: center; flex: none; }
        .split { height: 8px; border: 2px solid #fff; outline: 1px solid #7b9ac6; outline-offset: -1px; box-sizing: border-box; background: #6c91c8; }
        .track { flex: 1; }
        .thumb { display: flex; align-items: center; justify-content: center; height: 48%; box-sizing: border-box; border: 1px solid #5d6f8e; border-radius: 2px; background: linear-gradient(90deg, #f5f7fa, #dde3ea 50%, #b4c3d6); }
        .thumb::after { content: ""; width: 8px; height: 8px; background: repeating-linear-gradient(#7d8899 0 1px, transparent 1px 3px); }
      </style>
      <div class="split"></div>
      <button aria-label="Scroll up"><office-icon name="up"></office-icon></button>
      <div class="track"><div class="thumb"></div></div>
      <button aria-label="Scroll down"><office-icon name="down"></office-icon></button>`);
  }
}

class SheetTabs extends HTMLElement {
  connectedCallback() {
    if (this.shadowRoot) return;
    mount(this, `
      <style>
        :host { display: flex; align-items: stretch; height: 17px; box-sizing: border-box; border-top: 1px solid #7da3d4; border-bottom: 1px solid #6f92c4; background: linear-gradient(#8aabd8, #a3bcdf); font-size: 12px; line-height: 15px; }
        button { border: 0; padding: 0; background: none; font: inherit; color: #1c4587; display: flex; align-items: center; justify-content: center; }
        .nav { display: flex; gap: 7px; padding: 0 5px; background: #d9e7f8; }
        .tab { position: relative; z-index: 0; padding: 0 9px; }
        .tab::before { content: ""; position: absolute; inset: 0 0 0 -2px; z-index: -1; background: linear-gradient(#dbe8f9, #b9d0ee); border-right: 1px solid #6b8dbd; transform: skewX(-35deg); }
        .tab.on { font-weight: bold; z-index: 1; }
        .tab.on::before { background: #fff; }
        .gap { flex: 15; }
        .grip { width: 7px; box-sizing: border-box; border: 2px solid #fff; background: #6f93c7; }
        .scroll { flex: 13; display: flex; margin-right: 2px; background: #7c9ac3; }
        .scroll button { width: 17px; }
        .track { flex: 1; }
        .thumb { display: flex; align-items: center; justify-content: center; width: 82%; height: 13px; margin-top: 1px; box-sizing: border-box; border: 1px solid #5d6f8e; border-radius: 2px; background: linear-gradient(#f7f9fb, #dbe1e9 50%, #b1c1d5); }
        .thumb::after { content: ""; width: 8px; height: 7px; background: repeating-linear-gradient(90deg, #7d8899 0 1px, transparent 1px 2px); }
        .end { width: 16px; background: #7ba1d8; }
      </style>
      <div class="nav">
        <button aria-label="First sheet"><office-icon name="first"></office-icon></button>
        <button aria-label="Previous sheet"><office-icon name="prev"></office-icon></button>
        <button aria-label="Next sheet"><office-icon name="next"></office-icon></button>
        <button aria-label="Last sheet"><office-icon name="last"></office-icon></button>
      </div>
      <button class="tab on">a</button><button class="tab">15G</button><button class="tab">15H</button>
      <button class="tab" aria-label="Insert sheet"><office-icon name="newsheet"></office-icon></button>
      <div class="gap"></div>
      <div class="grip"></div>
      <div class="scroll">
        <button aria-label="Scroll left"><office-icon name="left"></office-icon></button>
        <div class="track"><div class="thumb"></div></div>
        <button aria-label="Scroll right"><office-icon name="right"></office-icon></button>
      </div>
      <div class="grip"></div>
      <div class="end"></div>`);
  }
}

class StatusBar extends HTMLElement {
  connectedCallback() {
    if (this.shadowRoot) return;
    mount(this, `
      <style>
        :host { display: flex; height: 22px; box-sizing: border-box; border-bottom: 1px solid #2a4b7c; background: linear-gradient(#dceafb, #d0e1f7 35%, #aecbf1 40%, #d6e6fa); }
        .ready { padding: 2px 8px 0 7px; border-right: 1px solid #8fb0dc; box-shadow: 1px 0 #fff; }
        .right { display: flex; align-items: center; margin-left: auto; padding: 0 5px; border-left: 1px solid #fff; background: linear-gradient(#a9c8f2, #8fb3e6 50%, #7099d2); }
        .views { display: flex; border: 1px solid #5c87c4; border-radius: 2px; margin-right: 9px; background: #bfd4f0; }
        .views button { width: 18px; height: 17px; }
        .views .on { background: linear-gradient(#ffdf9c, #ffd15c); }
        button { display: flex; align-items: center; justify-content: center; border: 0; padding: 0; background: none; font: inherit; color: inherit; }
        .zoom { margin-right: 9px; }
        input { appearance: none; width: 101px; height: 16px; margin: 0; background: linear-gradient(#43659b, #43659b) center / 100% 1px no-repeat; }
        input::-webkit-slider-thumb { appearance: none; width: 9px; height: 13px; border: 1px solid #3c5380; border-radius: 1px 1px 5px 5px; background: #e5eefb; box-sizing: border-box; }
      </style>
      <div class="ready">Ready</div>
      <div class="right">
        <div class="views"><button class="on" aria-label="Normal"><office-icon name="vnormal"></office-icon></button><button aria-label="Page Layout"><office-icon name="vlayout"></office-icon></button><button aria-label="Page Break"><office-icon name="vbreak"></office-icon></button></div>
        <button class="zoom">100%</button>
        <button aria-label="Zoom out"><office-icon name="minus"></office-icon></button>
        <input type="range" min="0" max="100" value="50" aria-label="Zoom">
        <button aria-label="Zoom in"><office-icon name="plus"></office-icon></button>
      </div>`);
  }
}

class TaskBar extends HTMLElement {
  connectedCallback() {
    if (this.shadowRoot) return;
    const apps = [["explorer", "open"], ["ie", ""], ["wmp", ""], ["chrome", "open"], ["yahoo", "open"], ["excel", "open front"]];
    mount(this, `
      <style>
        :host { display: flex; align-items: stretch; position: relative; z-index: 0; height: 39px; box-sizing: border-box; border-top: 1px solid #7f9fca; color: #fff; }
        button { display: flex; align-items: center; justify-content: center; border: 0; padding: 0; background: none; }
        .start { width: 54px; }
        .apps { display: flex; gap: 4px; padding-left: 6px; }
        .apps button { width: 58px; box-sizing: border-box; border-radius: 3px; }
        .open { border: 1px solid #9fb9dc; background: linear-gradient(120deg, #8aa5cc, #4a70aa 50%, #3a66a8); }
        .front { background: linear-gradient(135deg, #e4eaf3, #a6b8d4 50%, #7c98c2); border-color: #e6eef8; }
        .tray { display: flex; align-items: center; gap: 8px; margin-left: auto; }
        .tray > button:first-child { margin-right: 5px; }
        .clock { width: 70px; text-align: center; font-size: 12px; line-height: 17px; }
        .show { width: 12px; margin: 0 2px; border: 1px solid #7f98bb; background: linear-gradient(135deg, #7d94b6, #29497a 60%); }
      </style>
      <aero-glass blobs="780 20 16 24 .3;812 16 18 28 .7;832 30 9 18 .6;850 34 10 14 .5;858 10 10 14 .6;885 14 16 18 .7;905 36 9 12 .5;935 22 10 24 .8;965 8 13 14 .6;990 28 12 22 .7;1025 10 14 14 .6;1035 34 18 12 .6;1060 12 17 22 .8;1100 22 20 28 .7;1150 2 22 12 .6;1195 26 28 26 .4;1255 36 30 20 .4;1310 14 30 24 .35"></aero-glass>
      <button class="start" aria-label="Start"><office-icon name="start"></office-icon></button>
      <div class="apps">${apps.map(([n, c]) => `<button class="${c}" aria-label="${n}"><office-icon name="${n}"></office-icon></button>`).join("")}</div>
      <div class="tray">
        <button aria-label="Hidden icons"><office-icon name="trayup"></office-icon></button>
        <button aria-label="Action Center"><office-icon name="flag"></office-icon></button>
        <button aria-label="Power"><office-icon name="plug"></office-icon></button>
        <button aria-label="Network"><office-icon name="net"></office-icon></button>
        <button aria-label="Volume"><office-icon name="vol"></office-icon></button>
        <div class="clock">4:50 PM<br>6/17/2013</div>
      </div>
      <button class="show" aria-label="Show desktop"></button>`);
  }
}

class ExcelDesktop extends HTMLElement {
  connectedCallback() {
    if (this.shadowRoot) return;
    mount(this, `
      <style>
        :host { display: flex; flex-direction: column; height: 100vh; overflow: hidden; }
        :host > * { flex: none; }
        :host > main { display: flex; flex: 1; min-height: 0; }
      </style>
      <title-bar></title-bar>
      <ribbon-tabs tabs="Home,Insert,Page Layout,Formulas,Data,Review,View,Acrobat"></ribbon-tabs>
      <office-ribbon></office-ribbon>
      <formula-bar></formula-bar>
      <main><sheet-grid></sheet-grid><sheet-scroll></sheet-scroll></main>
      <sheet-tabs></sheet-tabs>
      <status-bar></status-bar>
      <task-bar></task-bar>`);
  }
}

customElements.define("office-icon", OfficeIcon);
customElements.define("aero-glass", AeroGlass);
customElements.define("title-bar", TitleBar);
customElements.define("ribbon-tabs", RibbonTabs);
customElements.define("ribbon-group", RibbonGroup);
customElements.define("big-button", BigButton);
customElements.define("small-button", SmallButton);
customElements.define("tool-set", ToolSet);
customElements.define("tool-button", ToolButton);
customElements.define("tool-select", ToolSelect);
customElements.define("office-ribbon", OfficeRibbon);
customElements.define("formula-bar", FormulaBar);
customElements.define("sheet-grid", SheetGrid);
customElements.define("sheet-scroll", SheetScroll);
customElements.define("sheet-tabs", SheetTabs);
customElements.define("status-bar", StatusBar);
customElements.define("task-bar", TaskBar);
customElements.define("excel-desktop", ExcelDesktop);
</script>
</body>
</html>
